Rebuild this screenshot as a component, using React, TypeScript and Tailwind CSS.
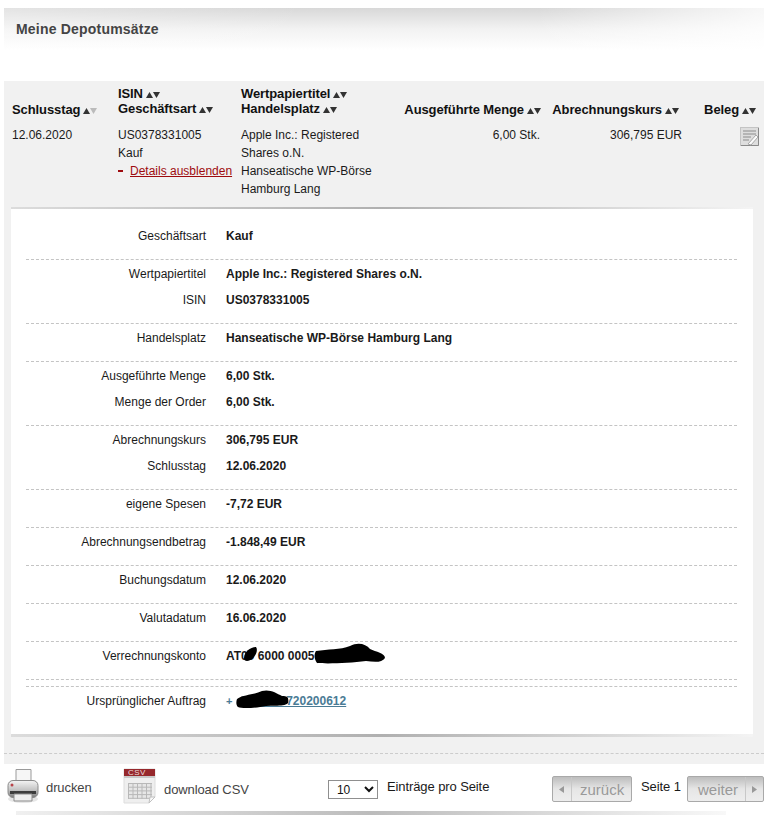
import React from 'react';

const groups: [string, React.ReactNode][][] = [
  [['Geschäftsart', 'Kauf']],
  [
    ['Wertpapiertitel', 'Apple Inc.: Registered Shares o.N.'],
    ['ISIN', 'US0378331005'],
  ],
  [['Handelsplatz', 'Hanseatische WP-Börse Hamburg Lang']],
  [
    ['Ausgeführte Menge', '6,00 Stk.'],
    ['Menge der Order', '6,00 Stk.'],
  ],
  [
    ['Abrechnungskurs', '306,795 EUR'],
    ['Schlusstag', '12.06.2020'],
  ],
  [['eigene Spesen', '-7,72 EUR']],
  [['Abrechnungsendbetrag', '-1.848,49 EUR']],
  [['Buchungsdatum', '12.06.2020']],
  [['Valutadatum', '16.06.2020']],
];

function Sort({ dim }: { dim?: boolean }) {
  return (
    <svg width="14" height="7" viewBox="0 0 14 7" className="ml-[3px] inline-block align-[0px]">
      <path d="M0 7 L3.5 1 L7 7 Z" fill="#333" />
      <path d="M7 1 L14 1 L10.5 7 Z" fill={dim ? '#bbb' : '#333'} />
    </svg>
  );
}

function Shadow({ className }: { className: string }) {
  return (
    <div
      className={
        'bg-gradient-to-r from-[#dcdcdc] via-[#b0b0b0] to-[#f4f4f4] ' + className
      }
    />
  );
}

function Row({ label, children }: { label: string; children: React.ReactNode }) {
  return (
    <div className="flex h-[26px] items-center">
      <div className="w-[180px] text-right">{label}</div>
      <div className="ml-5 font-bold">{children}</div>
    </div>
  );
}

function Blob({ className, d, w, h }: { className: string; d: string; w: number; h: number }) {
  return (
    <svg width={w} height={h} viewBox={`0 0 ${w} ${h}`} className={'absolute ' + className}>
      <path d={d} fill="#000" />
    </svg>
  );
}

function PrinterIcon() {
  return (
    <svg width="32" height="36" viewBox="0 0 32 36">
      <defs>
        <linearGradient id="pb" x1="0" y1="0" x2="0" y2="1">
          <stop offset="0" stopColor="#f4f4f4" />
          <stop offset="0.55" stopColor="#c4c4c4" />
          <stop offset="1" stopColor="#7a7a7a" />
        </linearGradient>
      </defs>
      <ellipse cx="16" cy="31" rx="15" ry="4" fill="#e6e6e6" />
      <path d="M9 1.5 H24 V16 H9 Z" fill="#f6f6f6" stroke="#9a9a9a" />
      <rect x="1" y="12.5" width="30" height="17" rx="5" fill="url(#pb)" stroke="#8a8a8a" />
      <rect x="3" y="23" width="26" height="3" fill="#3c3c3c" />
      <circle cx="5" cy="17" r="1.5" fill="#b9444a" />
      <path d="M7 26 H25 V33 H7 Z" fill="#eeeeee" stroke="#8d8d8d" />
    </svg>
  );
}

function CsvIcon() {
  const lines = [];
  for (let i = 0; i < 6; i++) lines.push(<path key={'v' + i} d={`M${5.5 + i * 4.5} 15 V31`} stroke="#b8b8b8" />);
  for (let i = 0; i < 5; i++) lines.push(<path key={'h' + i} d={`M5 ${15.5 + i * 3.7} H29`} stroke="#b8b8b8" />);
  return (
    <div className="relative h-9 w-[34px]">
      <svg width="34" height="36" viewBox="0 0 34 36" className="absolute inset-0">
        <path d="M1 1 H32 V29 L26 35 H1 Z" fill="#efefef" stroke="#dddddd" />
        <rect x="1" y="1" width="31" height="7" fill="#96282c" />
        <rect x="1" y="8" width="31" height="2" fill="#c9c9c9" />
        <rect x="5" y="15" width="24" height="16" fill="#e6e6e6" />
        {lines}
        <path d="M26 35 L27 29 H32 Z" fill="#fafafa" stroke="#c0c0c0" />
      </svg>
      <span className="absolute top-0 left-[5px] text-[8px] leading-[9px] tracking-[0.5px] text-[#ecdcdc]">CSV</span>
    </div>
  );
}

export default function App() {
  return (
    <div className="h-[817px] w-[777px] overflow-hidden bg-white font-['Liberation_Sans',Arial,sans-serif] text-xs text-[#1a1a1a]">
      <div className="ml-1 w-[760px]">
        <div className="h-[81px] pt-2">
          <div className="h-[42px] bg-[linear-gradient(to_right,rgba(255,255,255,0.3),rgba(255,255,255,0)_40%,rgba(255,255,255,0)_70%,rgba(255,255,255,0.8)),linear-gradient(to_bottom,#d8d8d8,#f2f2f2_50%,#ffffff)] pt-[13px] pl-3 text-sm leading-4 font-bold tracking-[0.2px] text-[#444]">
            Meine Depotumsätze
          </div>
        </div>

        <div className="bg-[#f1f1f1]">
          <div className="grid grid-cols-[106px_123px_146px_154px_141px_77px] pt-[5px] pl-2 text-[13px] leading-[15px] font-bold tracking-[-0.1px] text-[#111]">
            <div className="flex h-10 items-end pb-[9px]">
              <span>Schlusstag<Sort dim /></span>
            </div>
            <div className="h-10">
              <div>ISIN<Sort /></div>
              <div>Geschäftsart<Sort /></div>
            </div>
            <div className="h-10 whitespace-nowrap">
              <div>Wertpapiertitel<Sort /></div>
              <div>Handelsplatz<Sort /></div>
            </div>
            <div className="flex h-10 items-end justify-end pb-[9px] whitespace-nowrap">
              <span>Ausgeführte Menge<Sort /></span>
            </div>
            <div className="flex h-10 items-end justify-end pr-[3px] pb-[9px] whitespace-nowrap">
              <span>Abrechnungskurs<Sort /></span>
            </div>
            <div className="flex h-10 items-end justify-end pr-[3px] pb-[9px] whitespace-nowrap">
              <span>Beleg<Sort /></span>
            </div>
          </div>

          <div className="grid h-[81px] grid-cols-[106px_123px_146px_154px_141px_77px] pl-2 leading-[18px]">
            <div>12.06.2020</div>
            <div>
              <div>US0378331005</div>
              <div>Kauf</div>
              <div className="flex items-center whitespace-nowrap">
                <span className="mr-[7px] h-0.5 w-[5px] bg-[#9e0b0f]" />
                <span className="text-[#9e0b0f] underline">Details ausblenden</span>
              </div>
            </div>
            <div className="whitespace-nowrap">
              Apple Inc.: Registered
              <br />
              Shares o.N.
              <br />
              Hanseatische WP-Börse
              <br />
              Hamburg Lang
            </div>
            <div className="pr-px text-right">6,00 Stk.</div>
            <div className="text-right">306,795 EUR</div>
            <div className="flex justify-end">
              <svg width="19" height="19" viewBox="0 0 19 19" className="mt-px">
                <rect x="0.5" y="0.5" width="18" height="18" fill="#dedede" stroke="#c4c4c4" />
                <path d="M18.5 1 V18.5 H1" fill="none" stroke="#8a8a8a" />
                <path d="M3 4 H16 M3 7 H16 M3 10 H11 M3 13 H9" stroke="#8c8c8c" />
                <path d="M8 17 L16 8 L18 10 L11 18 Z" fill="#fbfbfb" stroke="#a8a8a8" />
              </svg>
            </div>
          </div>

          <div className="mr-[11px] ml-[7px] bg-white">
            <Shadow className="h-[2px]" />
            <div className="pt-[13px] pr-4 pl-[15px]">
              {groups.map((group, i) => (
                <div key={i} className="border-b border-dashed border-[#c4c4c4] pt-px pb-[10px]">
                  {group.map(([label, value]) => (
                    <Row key={label} label={label}>
                      {value}
                    </Row>
                  ))}
                </div>
              ))}
              <div className="border-b border-dashed border-[#c4c4c4] pt-px pb-[10px]">
                <Row label="Verrechnungskonto">
                  <span className="relative inline-block">
                    AT00 6000 0005 0000 000
                    <Blob className="top-[-2px] left-[17px]" w={15} h={16} d="M1 12 C1 6 7 1 13 1 C16 5 11 14 4 15 C2 15 1 14 1 12 Z" />
                    <Blob className="top-[-5px] left-[88px]" w={72} h={21} d="M2 8 C14 6 26 7 36 3 C44 -1 52 1 56 6 C62 9 71 10 71 15 C68 20 60 19 52 18 C36 20 14 21 3 20 C0 16 0 11 2 8 Z" />
                  </span>
                </Row>
              </div>
              <div className="h-[7px] border-b border-dashed border-[#c4c4c4]" />
              <div className="pt-px pb-[20px]">
                <Row label="Ursprünglicher Auftrag">
                  <span className="relative inline-block text-[#4a7b95]">
                    <span className="mr-[7px] text-[11px]">+</span>
                    <span className="underline">0000000720200612</span>
                    <Blob className="top-[-4px] left-[10px]" w={53} h={20} d="M1 10 C8 5 18 6 26 2 C34 0 40 4 46 7 C52 7 53 9 52 14 C48 18 40 16 30 17 C20 19 6 20 2 18 C0 16 0 13 1 10 Z" />
                  </span>
                </Row>
              </div>
            </div>
            <Shadow className="h-[3px]" />
          </div>

          <div className="mt-4 h-[11px] border-t border-dashed border-[#cccccc]" />
        </div>

        <div className="flex h-[47px] items-start pt-1 text-[13px] tracking-[-0.1px]">
          <div className="ml-[3px] flex w-[116px] items-center">
            <PrinterIcon />
            <span className="ml-[7px] pt-[3px] text-[#444]">drucken</span>
          </div>
          <CsvIcon />
          <span className="mt-[13px] ml-[7px] w-[164px] text-[#444]">download CSV</span>
          <select className="mt-[12px] h-[19px] w-[50px] border border-[#8f8f8f] bg-white pl-1 text-xs text-[#111]">
            <option>10</option>
          </select>
          <span className="mt-[11px] ml-[9px] w-[165px] leading-4">Einträge pro Seite</span>
          <div className="mt-2 flex h-[26px] w-20 rounded-[2px] border border-[#a9a9a9] bg-gradient-to-b from-[#bdbdbd] via-[#e6e6e6] to-[#ededed] text-[15px] leading-[26px] tracking-normal text-[#999]">
            <div className="flex w-[19px] items-center justify-center border-r border-[#c8c8c8]">
              <svg width="6" height="7" viewBox="0 0 6 7"><path d="M5 0 V7 L0 3.5 Z" fill="#999" /></svg>
            </div>
            <span className="pl-2">zurück</span>
          </div>
          <span className="mt-[11px] ml-[9px] w-[46px] leading-4">Seite 1</span>
          <div className="mt-2 flex h-[26px] w-[77px] rounded-[2px] border border-[#a9a9a9] bg-gradient-to-b from-[#bdbdbd] via-[#e6e6e6] to-[#ededed] text-[15px] leading-[26px] tracking-normal text-[#999]">
            <span className="w-[57px] pl-[10px]">weiter</span>
            <div className="flex flex-1 items-center justify-center border-l border-[#c8c8c8]">
              <svg width="6" height="7" viewBox="0 0 6 7"><path d="M0 0 V7 L5 3.5 Z" fill="#999" /></svg>
            </div>
          </div>
        </div>
        <div className="ml-[12px] h-1 w-[710px] bg-gradient-to-r from-[#f0f0f0] via-[#bcbcbc] to-[#f8f8f8]" />
      </div>
    </div>
  );
}
